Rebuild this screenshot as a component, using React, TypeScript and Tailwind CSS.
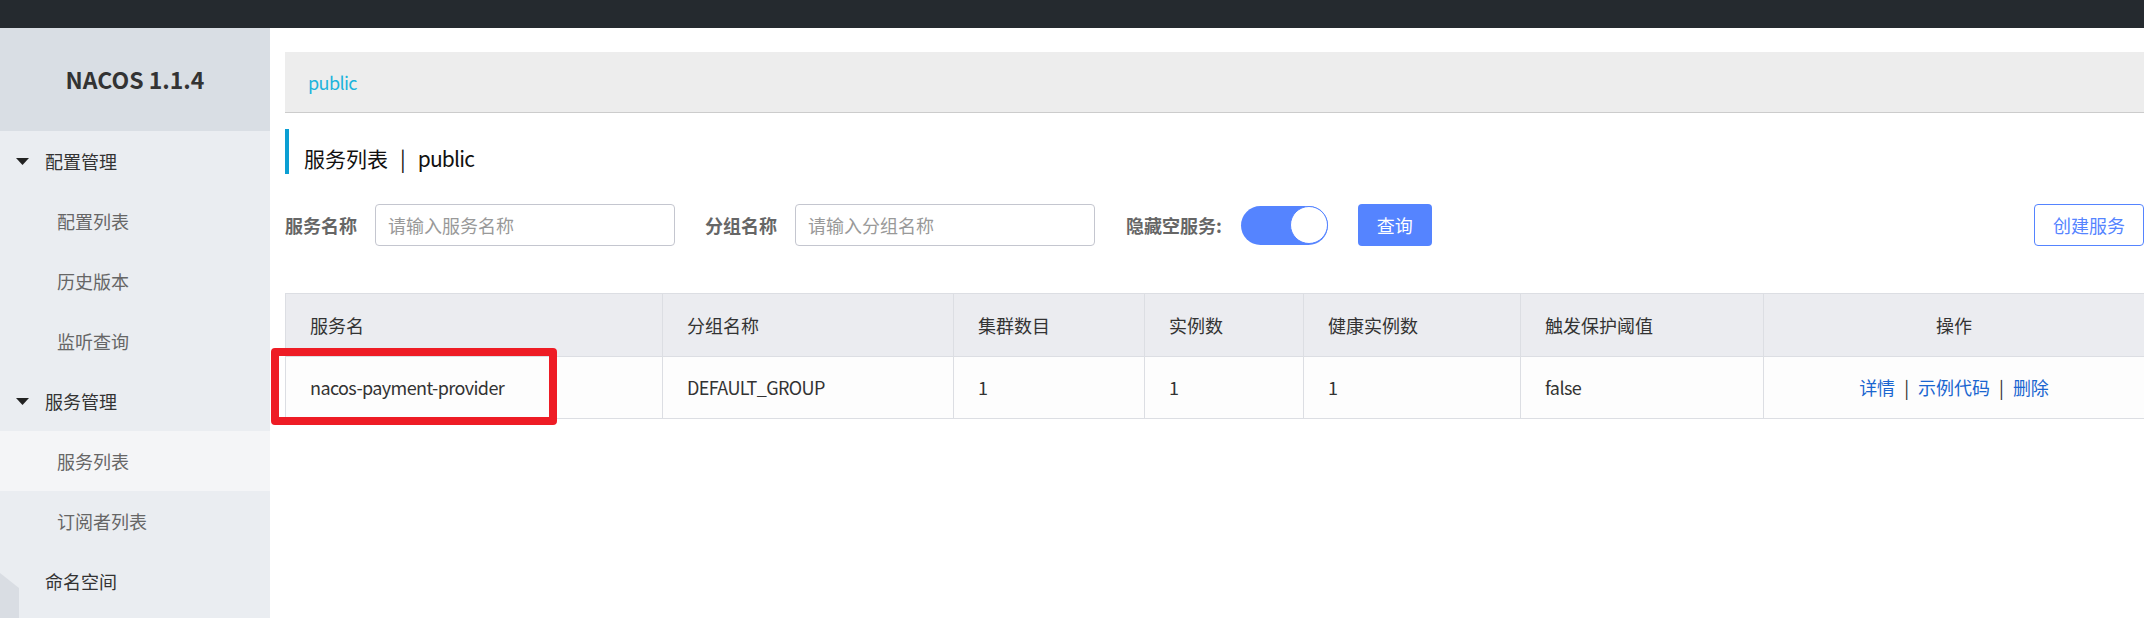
const menu = [
  { label: "配置管理", level: 0, arrow: true },
  { label: "配置列表", level: 1 },
  { label: "历史版本", level: 1 },
  { label: "监听查询", level: 1 },
  { label: "服务管理", level: 0, arrow: true },
  { label: "服务列表", level: 1, active: true },
  { label: "订阅者列表", level: 1 },
  { label: "命名空间", level: 0 },
];

const columns = [
  { title: "服务名", width: 377 },
  { title: "分组名称", width: 291 },
  { title: "集群数目", width: 191 },
  { title: "实例数", width: 159 },
  { title: "健康实例数", width: 217 },
  { title: "触发保护阈值", width: 243 },
  { title: "操作", width: 381, center: true },
];

const row = ["nacos-payment-provider", "DEFAULT_GROUP", "1", "1", "1", "false"];

const Sidebar = () => (
  <aside className="relative w-[270px] shrink-0 bg-[#eaedf1]">
    <div className="flex h-[103px] items-center justify-center bg-[#d9dee4] text-[23px] font-bold text-[#333]">
      NACOS 1.1.4
    </div>
    {menu.map((item) => (
      <div
        key={item.label}
        className={`flex h-[60px] items-center text-[18px] ${
          item.active ? "bg-[#f4f5f7]" : ""
        } ${item.level === 0 ? "pl-[16px] text-[#333]" : "pl-[57px] text-[#666]"}`}
      >
        {item.level === 0 && (
          <span className="flex w-[29px] items-center">
            {item.arrow && (
              <svg width="13" height="7" viewBox="0 0 13 7">
                <path d="M0 0h13L6.5 7z" fill="#222" />
              </svg>
            )}
          </span>
        )}
        {item.label}
      </div>
    ))}
    <svg className="absolute left-0 top-[545px]" width="20" height="45" viewBox="0 0 20 45">
      <path d="M0 0L19 15V45H0z" fill="#d9dde3" />
    </svg>
  </aside>
);

const Filters = () => (
  <div className="mt-[30px] flex h-[42px] items-center text-[18px]">
    <span className="font-bold text-[#666]">服务名称</span>
    <div className="ml-[18px] flex h-[42px] w-[300px] items-center rounded-[4px] border border-[#c4c6cf] px-[12px] text-[#999]">
      请输入服务名称
    </div>
    <span className="ml-[30px] font-bold text-[#666]">分组名称</span>
    <div className="ml-[18px] flex h-[42px] w-[300px] items-center rounded-[4px] border border-[#c4c6cf] px-[12px] text-[#999]">
      请输入分组名称
    </div>
    <span className="ml-[31px] font-bold text-[#666]">隐藏空服务:</span>
    <div className="ml-[19px] flex h-[39px] w-[87px] items-center justify-end rounded-full bg-[#5584ff]">
      <div className="h-[38px] w-[38px] rounded-full border border-[#5584ff] bg-white" />
    </div>
    <button className="ml-[30px] h-[42px] w-[74px] rounded-[4px] bg-[#5584ff] text-white">查询</button>
    <button className="ml-auto h-[42px] rounded-[4px] border border-[#5584ff] bg-white px-[18px] text-[#5584ff]">
      创建服务
    </button>
  </div>
);

const ServiceTable = () => (
  <table className="mt-[47px] w-[1859px] table-fixed border-collapse text-[18px] text-[#333]">
    <colgroup>
      {columns.map((c) => (
        <col key={c.title} style={{ width: c.width }} />
      ))}
    </colgroup>
    <thead>
      <tr className="h-[63px] bg-[#ebecf0]">
        {columns.map((c) => (
          <th
            key={c.title}
            className={`border border-[#dcdee3] px-[24px] font-normal ${c.center ? "text-center" : "text-left"}`}
          >
            {c.title}
          </th>
        ))}
      </tr>
    </thead>
    <tbody>
      <tr className="h-[62px] bg-[#fdfdfd]">
        {row.map((v, i) => (
          <td key={i} className="border border-[#dcdee3] px-[24px] tracking-[-0.6px]">
            {v}
          </td>
        ))}
        <td className="border border-[#dcdee3] px-[24px] text-center">
          <span className="text-[#1a66d0]">详情</span>
          <span className="px-[9px]">|</span>
          <span className="text-[#1a66d0]">示例代码</span>
          <span className="px-[9px]">|</span>
          <span className="text-[#1a66d0]">删除</span>
        </td>
      </tr>
    </tbody>
  </table>
);

export default function App() {
  return (
    <div className="relative h-[618px] w-[2144px] overflow-hidden bg-white font-['Noto_Sans_CJK_SC','Noto_Sans',sans-serif]">
      <div className="h-[28px] bg-[#252a2f]" />
      <div className="flex h-[590px]">
        <Sidebar />
        <main className="min-w-0 flex-1 pl-[15px]">
          <div className="mt-[24px] flex h-[61px] items-center border-b border-[#cccccc] bg-[#ededed] pl-[23px] text-[18px] tracking-[-0.6px] text-[#1db4dc]">
            public
          </div>
          <div className="mt-[16px] flex h-[45px] items-center border-l-4 border-[#0b9fd3] pl-[15px] pt-[15px] text-[21px] text-[#111]">
            服务列表
            <span className="px-[12px]">|</span>
            <span className="tracking-[-0.8px]">public</span>
          </div>
          <Filters />
          <ServiceTable />
        </main>
      </div>
      <div className="absolute left-[271px] top-[348px] h-[77px] w-[286px] rounded-[4px] border-[8px] border-[#ee1c25]" />
    </div>
  );
}
